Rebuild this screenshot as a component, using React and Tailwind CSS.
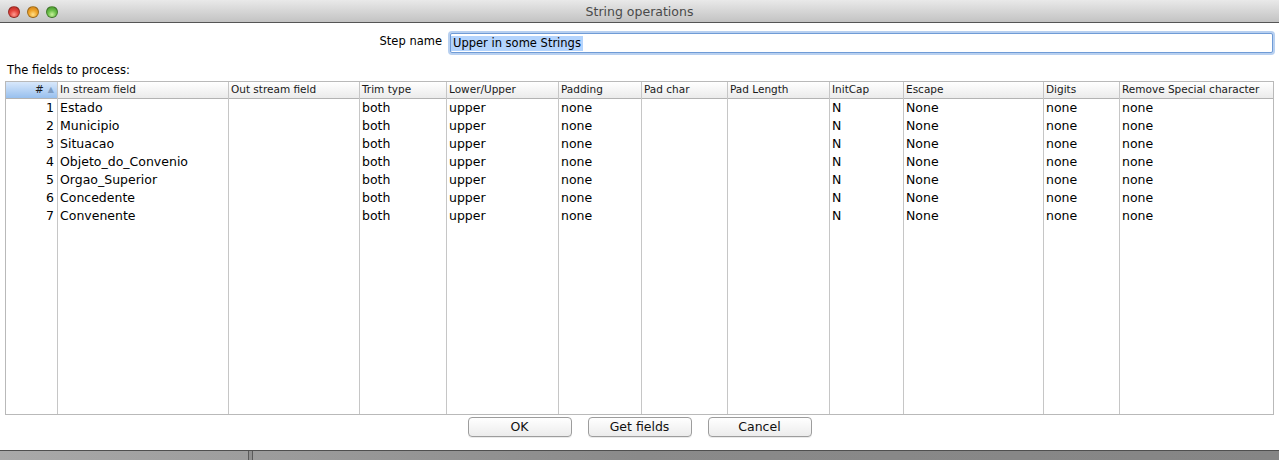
import React from "react";

const cols = [
  { h: "#", w: "w-[52px]" },
  { h: "In stream field", w: "w-[171px]" },
  { h: "Out stream field", w: "w-[131px]" },
  { h: "Trim type", w: "w-[87px]" },
  { h: "Lower/Upper", w: "w-[112px]" },
  { h: "Padding", w: "w-[83px]" },
  { h: "Pad char", w: "w-[86px]" },
  { h: "Pad Length", w: "w-[102px]" },
  { h: "InitCap", w: "w-[74px]" },
  { h: "Escape", w: "w-[140px]" },
  { h: "Digits", w: "w-[76px]" },
  { h: "Remove Special character", w: "flex-1" },
];

const names = ["Estado", "Municipio", "Situacao", "Objeto_do_Convenio", "Orgao_Superior", "Concedente", "Convenente"];

const rows = names.map((n, i) => [String(i + 1), n, "", "both", "upper", "none", "", "", "N", "None", "none", "none"]);

function Light({ cls }) {
  return <div className={"w-[12px] h-[12px] rounded-full border border-black/30 " + cls} />;
}

function Button({ children }) {
  return (
    <div className="w-[104px] h-[20px] flex items-center justify-center rounded-[4px] border border-[#9d9d9d] bg-gradient-to-b from-[#ffffff] to-[#ececec] text-[12.5px] text-[#111] shadow-[0_1px_0_rgba(0,0,0,0.08)]">
      {children}
    </div>
  );
}

export default function App() {
  return (
    <div className="w-[1279px] h-[460px] flex flex-col bg-white overflow-hidden font-['DejaVu_Sans','Lucida_Grande',sans-serif] text-black">
      {/* title bar */}
      <div className="h-[23px] shrink-0 relative flex items-center bg-gradient-to-b from-[#e9e9e9] to-[#c3c3c3] border-b border-[#555]">
        <div className="flex items-center gap-[7px] pl-[8px] pt-[2px]">
          <Light cls="bg-[radial-gradient(circle_at_50%_75%,#ff9c91_0%,#e5463e_45%,#b1261f_100%)]" />
          <Light cls="bg-[radial-gradient(circle_at_50%_75%,#ffe08a_0%,#f0a62c_45%,#c77a12_100%)]" />
          <Light cls="bg-[radial-gradient(circle_at_50%_75%,#c9f29b_0%,#6cc04a_45%,#3e8a25_100%)]" />
        </div>
        <div className="absolute inset-0 flex items-center justify-center pt-[3px] text-[12.5px] text-[#4a4a4a]">
          String operations
        </div>
      </div>

      {/* step name */}
      <div className="flex mt-[10px] h-[20px] shrink-0">
        <div className="w-[448px] flex items-center justify-end pr-[6px] pb-[3px] text-[11.5px]">Step name</div>
        <div className="ml-[2px] w-[823px] h-[20px] border border-[#6f9bd6] rounded-[2px] shadow-[0_0_0_2px_rgba(125,170,228,0.55)] flex items-center bg-white">
          <span className="bg-[#b4d4fd] px-[2px] leading-[15px] text-[11.5px]">Upper in some Strings</span>
        </div>
      </div>

      {/* label */}
      <div className="h-[28px] shrink-0 pt-[10px] pl-[7px] text-[11.5px] leading-[14px]">The fields to process:</div>

      {/* table */}
      <div className="ml-[5px] w-[1269px] h-[334px] shrink-0 border border-[#b9b9b9] flex">
        {cols.map((c, ci) => (
          <div key={ci} className={c.w + " flex flex-col " + (ci < cols.length - 1 ? "border-r border-[#c6c6c6]" : "")}>
            <div
              className={
                "h-[17px] border-b border-[#b3b3b3] flex items-center text-[10.5px] text-[#1a1a1a] whitespace-nowrap overflow-hidden " +
                (ci === 0
                  ? "justify-end pr-[3px] bg-gradient-to-b from-[#d8e8fb] to-[#98c0ee]"
                  : "pl-[2px] bg-gradient-to-b from-[#ffffff] to-[#ebebeb]")
              }
            >
              {ci === 0 ? (
                <>
                  <span>#</span>
                  <span className="ml-[4px] text-[8px] text-[#7f9ec4]">▲</span>
                </>
              ) : (
                c.h
              )}
            </div>
            {rows.map((r, ri) => (
              <div
                key={ri}
                className={
                  "h-[18px] flex items-center text-[12.5px] whitespace-nowrap overflow-hidden " +
                  (ci === 0 ? "justify-end pr-[3px]" : "pl-[2px]")
                }
              >
                {r[ci]}
              </div>
            ))}
          </div>
        ))}
      </div>

      {/* buttons */}
      <div className="mt-[2px] h-[20px] shrink-0 flex justify-center gap-[16px]">
        <Button>OK</Button>
        <Button>Get fields</Button>
        <Button>Cancel</Button>
      </div>

      <div className="flex-1" />

      {/* background strip */}
      <div className="h-[10px] shrink-0 border-t border-[#4f4f4f] flex bg-gradient-to-r from-[#a9a9a9] via-[#8a8a8a] to-[#858585]">
        <div className="w-[248px]" />
        <div className="w-[1px] bg-[#5a5a5a]" />
        <div className="w-[3px] bg-[#8f8f8f]" />
        <div className="w-[1px] bg-[#5a5a5a]" />
      </div>
    </div>
  );
}
